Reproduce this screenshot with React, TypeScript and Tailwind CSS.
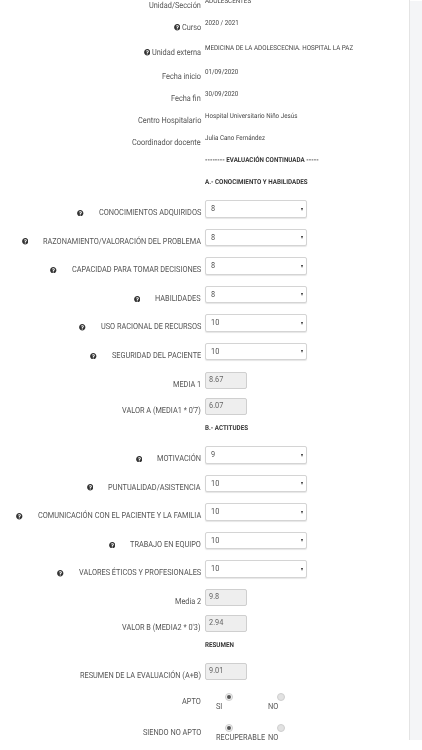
import { FaQuestionCircle } from 'react-icons/fa';

const font = "font-['Roboto','Liberation_Sans',sans-serif] [text-rendering:geometricPrecision] antialiased";

function Help({ gap }: { gap: number }) {
  return (
    <FaQuestionCircle
      size={6.5}
      className="shrink-0 text-[#333]"
      style={{ marginRight: gap }}
    />
  );
}

function Label({ text, help }: { text: string; help?: number }) {
  return (
    <div className="flex w-[201px] shrink-0 items-center justify-end text-[7.35px] leading-[10px] whitespace-nowrap text-[#555]">
      {help !== undefined && <Help gap={help} />}
      <span className="inline-block scale-y-[1.15] will-change-transform">{text}</span>
    </div>
  );
}

function InfoRow({ label, value, help }: { label: string; value: string; help?: number }) {
  return (
    <div className="flex h-[22px] items-start">
      <div className="pt-[3.5px]">
        <Label text={label} help={help} />
      </div>
      <div className="ml-[4px] inline-block scale-y-[1.1] text-[6.25px] leading-[8px] whitespace-nowrap text-[#444] will-change-transform">{value}</div>
    </div>
  );
}

function Heading({ text, height }: { text: string; height: string }) {
  return (
    <div className={`flex items-start pl-[205px] ${height}`}>
      <span className="inline-block scale-y-[1.1] text-[6.25px] leading-[8px] font-bold whitespace-nowrap text-[#333] will-change-transform">{text}</span>
    </div>
  );
}

function SelectRow({ label, value, help }: { label: string; value: string; help: number }) {
  return (
    <div className="flex h-[28.6px] items-start">
      <div className="pt-[8px]">
        <Label text={label} help={help} />
      </div>
      <div className="ml-[4px] flex h-[17.5px] w-[102px] items-start justify-between rounded-[2px] border border-[#d4d4d4] bg-white pt-[3px] pr-[3px] pl-[5px] shadow-[0_1px_1px_rgba(0,0,0,0.1)]">
        <span className="inline-block scale-y-[1.15] text-[7.35px] leading-[10px] text-[#555] will-change-transform">{value}</span>
        <span className="mt-[3.5px] h-0 w-0 border-x-[1.6px] border-t-[3px] border-x-transparent border-t-[#333]" />
      </div>
    </div>
  );
}

function ReadonlyRow({ label, value, height }: { label: string; value: string; height: string }) {
  return (
    <div className={`flex items-start ${height}`}>
      <div className="pt-[8px]">
        <Label text={label} />
      </div>
      <div className="ml-[4px] h-[17px] w-[42px] rounded-[2px] border border-[#cfcfcf] bg-[#eeeeee] pt-[2px] pl-[3px] text-[7.35px] leading-[10px] text-[#666]">
        <span className="inline-block scale-y-[1.15] will-change-transform">{value}</span>
      </div>
    </div>
  );
}

function Radio({ text, checked, width }: { text: string; checked?: boolean; width: string }) {
  return (
    <div className={`flex flex-col items-start ${width}`}>
      <span
        className={`ml-[9px] flex h-[8px] w-[8px] items-center justify-center rounded-full border border-[#cfcfcf] ${
          checked ? 'bg-[#f2f2f2]' : 'bg-[#e2e2e2]'
        }`}
      >
        {checked && <span className="h-[3.5px] w-[3.5px] rounded-full bg-[#555]" />}
      </span>
      <span className="mt-[1px] inline-block scale-y-[1.15] text-[7.35px] leading-[10px] whitespace-nowrap text-[#555] will-change-transform">{text}</span>
    </div>
  );
}

function RadioRow({ label, first, second, height }: { label: string; first: string; second: string; height: string }) {
  return (
    <div className={`flex items-start ${height}`}>
      <div className="pt-[4px]">
        <Label text={label} />
      </div>
      <div className="ml-[15px] flex">
        <Radio text={first} checked width="w-[52px]" />
        <Radio text={second} width="w-[30px]" />
      </div>
    </div>
  );
}

export default function App() {
  return (
    <div className={`${font} h-[750px] w-[422px] overflow-hidden bg-white`}>
      <div className="flex h-[740px] overflow-hidden">
        <main className="w-[410px] shrink-0 border-r border-[#e4e4e4] bg-white">
          <div className="-mt-[3px]">
            <InfoRow label="Unidad/Sección" value="ADOLESCENTES" />
            <InfoRow label="Curso" value="2020 / 2021" help={1.5} />
            <div className="h-[3px]" />
            <InfoRow label="Unidad externa" value="MEDICINA DE LA ADOLESCECNIA. HOSPITAL LA PAZ" help={1.5} />
            <div className="h-[2px]" />
            <InfoRow label="Fecha inicio" value="01/09/2020" />
            <InfoRow label="Fecha fin" value="30/09/2020" />
            <InfoRow label="Centro Hospitalario" value="Hospital Universitario Niño Jesús" />
            <InfoRow label="Coordinador docente" value="Julia Cano Fernández" />
            <Heading text="-------- EVALUACIÓN CONTINUADA -----" height="h-[22px]" />
            <Heading text="A.- CONOCIMIENTO Y HABILIDADES" height="h-[22px]" />
          </div>
          <SelectRow label="CONOCIMIENTOS ADQUIRIDOS" value="8" help={15} />
          <SelectRow label="RAZONAMIENTO/VALORACIÓN DEL PROBLEMA" value="8" help={15} />
          <SelectRow label="CAPACIDAD PARA TOMAR DECISIONES" value="8" help={15} />
          <SelectRow label="HABILIDADES" value="8" help={15} />
          <SelectRow label="USO RACIONAL DE RECURSOS" value="10" help={15} />
          <SelectRow label="SEGURIDAD DEL PACIENTE" value="10" help={15} />
          <ReadonlyRow label="MEDIA 1" value="8.67" height="h-[26px]" />
          <ReadonlyRow label="VALOR A (MEDIA1 * 0'7)" value="6.07" height="h-[26px]" />
          <Heading text="B.- ACTITUDES" height="h-[22.5px]" />
          <SelectRow label="MOTIVACIÓN" value="9" help={15} />
          <SelectRow label="PUNTUALIDAD/ASISTENCIA" value="10" help={15} />
          <SelectRow label="COMUNICACIÓN CON EL PACIENTE Y LA FAMILIA" value="10" help={15} />
          <SelectRow label="TRABAJO EN EQUIPO" value="10" help={15} />
          <SelectRow label="VALORES ÉTICOS Y PROFESIONALES" value="10" help={15} />
          <ReadonlyRow label="Media 2" value="9.8" height="h-[26px]" />
          <ReadonlyRow label="VALOR B (MEDIA2 * 0'3)" value="2.94" height="h-[26px]" />
          <Heading text="RESUMEN" height="h-[22px]" />
          <ReadonlyRow label="RESUMEN DE LA EVALUACIÓN (A+B)" value="9.01" height="h-[30px]" />
          <RadioRow label="APTO" first="SI" second="NO" height="h-[31px]" />
          <RadioRow label="SIENDO NO APTO" first="RECUPERABLE" second="NO" height="h-[30px]" />
        </main>
        <aside className="mt-[1px] flex-1 bg-[#f4f5f7]" />
      </div>
    </div>
  );
}
